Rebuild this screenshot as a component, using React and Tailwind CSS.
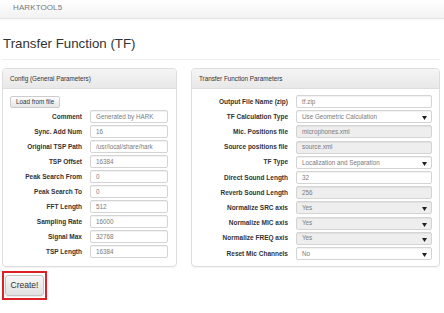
import React from "react";

const configRows = [
  { label: "Comment", value: "Generated by HARK" },
  { label: "Sync. Add Num", value: "16" },
  { label: "Original TSP Path", value: "/usr/local/share/hark" },
  { label: "TSP Offset", value: "16384" },
  { label: "Peak Search From", value: "0" },
  { label: "Peak Search To", value: "0" },
  { label: "FFT Length", value: "512" },
  { label: "Sampling Rate", value: "16000" },
  { label: "Signal Max", value: "32768" },
  { label: "TSP Length", value: "16384" },
];

const tfRows = [
  { label: "Output File Name (zip)", value: "tf.zip" },
  { label: "TF Calculation Type", value: "Use Geometric Calculation", select: true },
  { label: "Mic. Positions file", value: "microphones.xml", disabled: true },
  { label: "Source positions file", value: "source.xml", disabled: true },
  { label: "TF Type", value: "Localization and Separation", select: true },
  { label: "Direct Sound Length", value: "32" },
  { label: "Reverb Sound Length", value: "256", disabled: true },
  { label: "Normalize SRC axis", value: "Yes", select: true, disabled: true },
  { label: "Normalize MIC axis", value: "Yes", select: true, disabled: true },
  { label: "Normalize FREQ axis", value: "Yes", select: true, disabled: true },
  { label: "Reset Mic Channels", value: "No", select: true },
];

const Field = ({ value, select, disabled, className }) => (
  <div
    className={`relative flex items-center h-[13px] border border-[#d4d4d4] rounded-[2px] px-[5px] text-[6.3px] text-[#7a7a7a] shadow-[inset_0_1px_1px_rgba(0,0,0,0.06)] overflow-hidden whitespace-nowrap ${
      disabled ? "bg-[#eeeeee]" : "bg-white"
    } ${className}`}
  >
    {value}
    {select && (
      <svg className="absolute right-[4px] top-[5px]" width="5" height="4" viewBox="0 0 5 4">
        <path d="M0 0 L5 0 L2.5 4 Z" fill="#222" />
      </svg>
    )}
  </div>
);

const Row = ({ row, labelW, fieldW }) => (
  <div className="flex items-center h-[13px]">
    <div
      className={`${labelW} shrink-0 text-right font-bold text-[6.5px] text-[#333] whitespace-nowrap`}
    >
      {row.label}
    </div>
    <Field {...row} className={fieldW} />
  </div>
);

const PanelHead = ({ title }) => (
  <div className="h-[20px] flex items-center px-[7px] border-b border-[#dddddd] rounded-t-[3px] bg-gradient-to-b from-[#f5f5f5] to-[#e8e8e8] text-[6.3px] text-[#333]">
    {title}
  </div>
);

const App = () => {
  return (
    <div
      className="w-[444px] h-[313px] bg-white overflow-hidden"
      style={{ fontFamily: '"Liberation Sans", Arial, sans-serif' }}
    >
      <div className="h-[19px] flex items-center pl-[13px] pb-[3px] border-b border-[#e3e3e3] bg-gradient-to-b from-white to-[#f2f2f2] shadow-[0_1px_2px_rgba(0,0,0,0.04)]">
        <span className="text-[8px] text-[#777] tracking-[0.1px]">HARKTOOL5</span>
      </div>

      <div className="px-[2px]">
        <div className="mt-[17px] pb-[7px] border-b border-[#eeeeee] mr-[2px]">
          <h1 className="text-[13.3px] leading-[16px] text-[#333] pl-[1px]">Transfer Function (TF)</h1>
        </div>

        <div className="flex mt-[8px] gap-[14px]">
          <div className="w-[175px] h-[199px] border border-[#dddddd] rounded-[4px] shadow-[0_1px_1px_rgba(0,0,0,0.05)]">
            <PanelHead title="Config (General Parameters)" />
            <div className="px-[7px] pt-[7px] pb-[7px] flex flex-col gap-[2px]">
              <button className="self-start h-[12px] px-[5px] text-[6.3px] text-[#333] border border-[#cccccc] rounded-[2px] bg-gradient-to-b from-white to-[#e6e6e6]">
                Load from file
              </button>
              {configRows.map((r) => (
                <Row key={r.label} row={r} labelW="w-[72px] pr-[8px] box-content" fieldW="w-[78px]" />
              ))}
            </div>
          </div>

          <div className="w-[249px] h-[199px] border border-[#dddddd] rounded-[4px] shadow-[0_1px_1px_rgba(0,0,0,0.05)]">
            <PanelHead title="Transfer Function Parameters" />
            <div className="px-[7px] pt-[6px] flex flex-col gap-[2.2px]">
              {tfRows.map((r) => (
                <Row key={r.label} row={r} labelW="w-[89px] pr-[8px] box-content" fieldW="w-[137px]" />
              ))}
            </div>
          </div>
        </div>

        <div className="mt-[4px] w-[45px] h-[29px] border-2 border-[#dd1f26] flex items-center justify-center">
          <button className="w-[39px] h-[21px] text-[8.5px] text-[#333] border border-[#c4c4c4] rounded-[3px] bg-gradient-to-b from-[#f8f8f8] to-[#e0e0e0] shadow-[0_1px_1px_rgba(0,0,0,0.08)]">
            Create!
          </button>
        </div>
      </div>
    </div>
  );
};

export default App;
